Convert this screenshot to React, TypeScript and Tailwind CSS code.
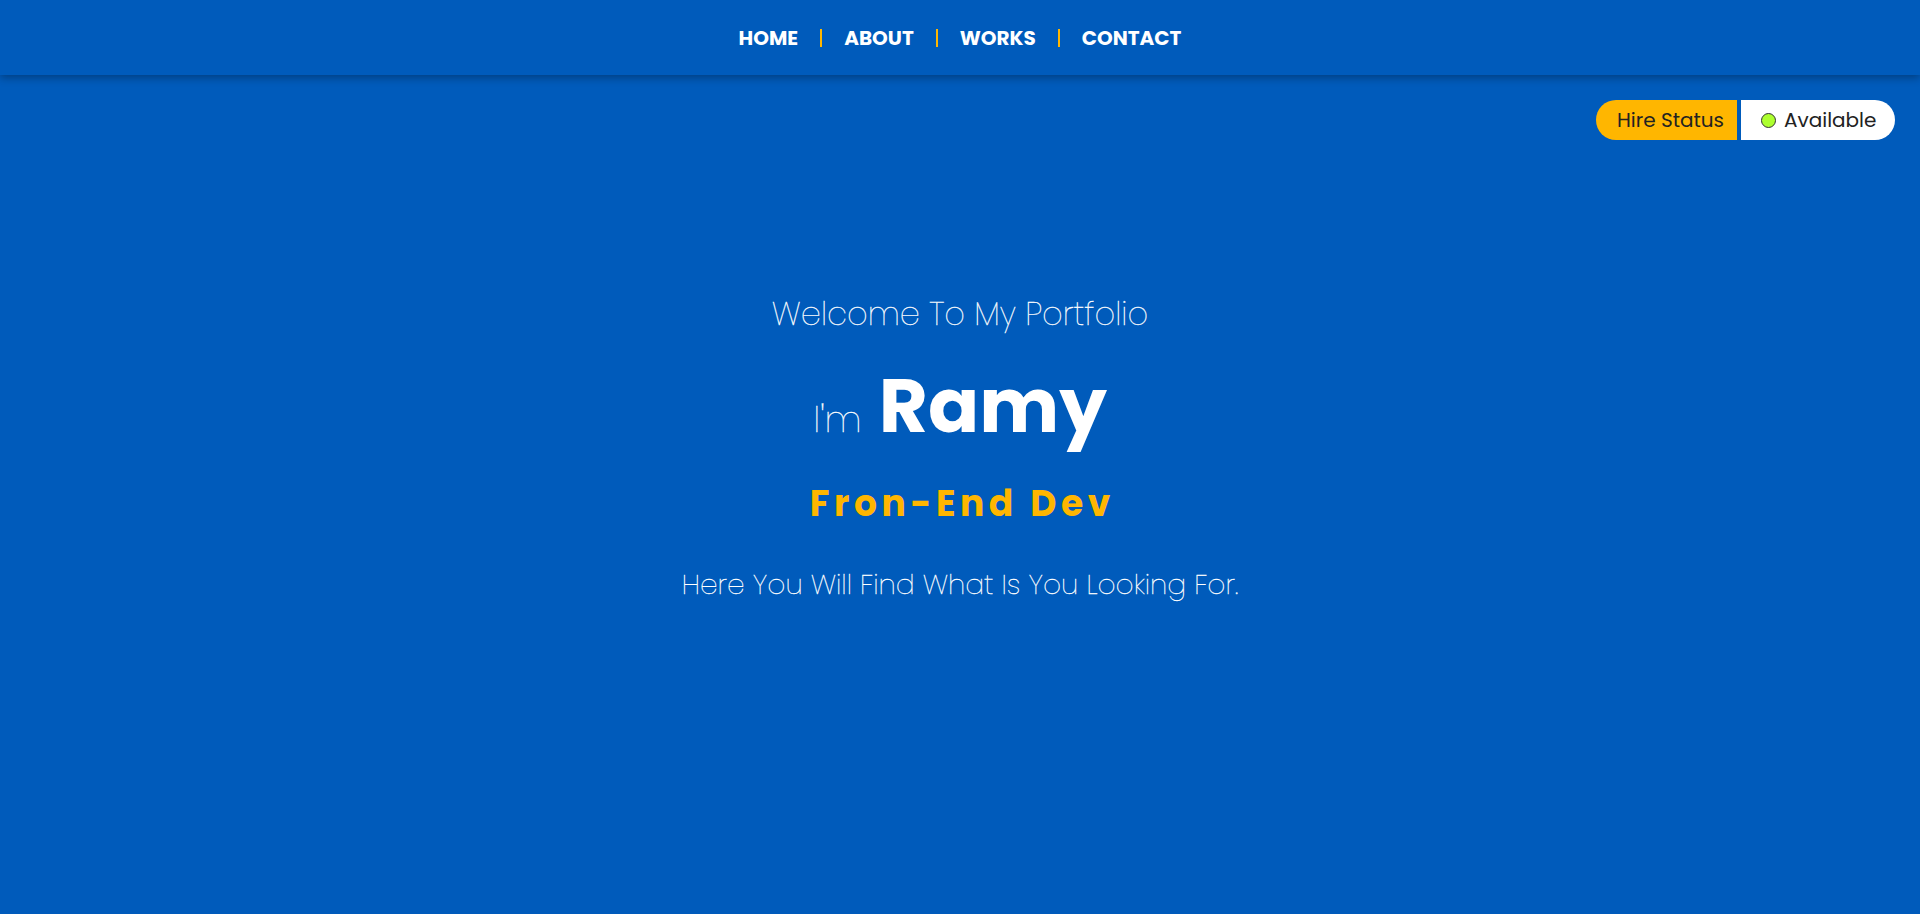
import React from "react";

export default function App() {
  const items = ["HOME", "ABOUT", "WORKS", "CONTACT"];
  return (
    <div className="min-h-[914px] w-full bg-[#005bbb] text-white font-[Poppins,Inter,sans-serif]">
      <header className="relative z-10 flex h-[75px] w-full items-center justify-center bg-[#005bbb] shadow-[0_3px_8px_rgba(0,0,0,0.3)]">
        <ul className="flex items-center text-[20px] font-bold">
          {items.map((it, i) => (
            <li key={it} className="flex items-center">
              {i > 0 && <span className="mx-[22px] h-[18px] w-[2px] bg-[#ffb600]" />}
              <a className="cursor-pointer">{it}</a>
            </li>
          ))}
        </ul>
      </header>

      <div className="flex justify-end pt-[25px] pr-[25px]">
        <div className="flex h-[40px] items-stretch text-[20px] text-[#222]">
          <div className="flex w-[141px] items-center rounded-l-full bg-[#ffb600] pl-[21px]">Hire Status</div>
          <div className="ml-[4px] flex w-[154px] items-center gap-[8px] rounded-r-full bg-white pl-[20px]">
            <span className="h-[15px] w-[15px] shrink-0 rounded-full border border-[#333] bg-[#adff2f]" />
            <span>Available</span>
          </div>
        </div>
      </div>

      <main className="flex flex-col items-center pt-[154px] text-center">
        <h2 className="text-[32px] font-extralight leading-[40px] [-webkit-text-stroke:0.3px_white]">Welcome To My Portfolio</h2>
        <h1 className="mt-[24px] flex h-[96px] items-baseline gap-[17px]">
          <span className="text-[37px] font-extralight leading-none [-webkit-text-stroke:0.3px_white]">I'm</span>
          <span className="text-[75.5px] font-bold leading-[96px]">Ramy</span>
        </h1>
        <h3 className="mt-[28px] pl-[4.6px] text-[36px] font-bold leading-[44px] tracking-[4.6px] text-[#ffb600]">Fron-End Dev</h3>
        <p className="mt-[41px] text-[28px] font-extralight leading-[36px] [-webkit-text-stroke:0.3px_white]">Here You Will Find What Is You Looking For.</p>
      </main>
    </div>
  );
}
